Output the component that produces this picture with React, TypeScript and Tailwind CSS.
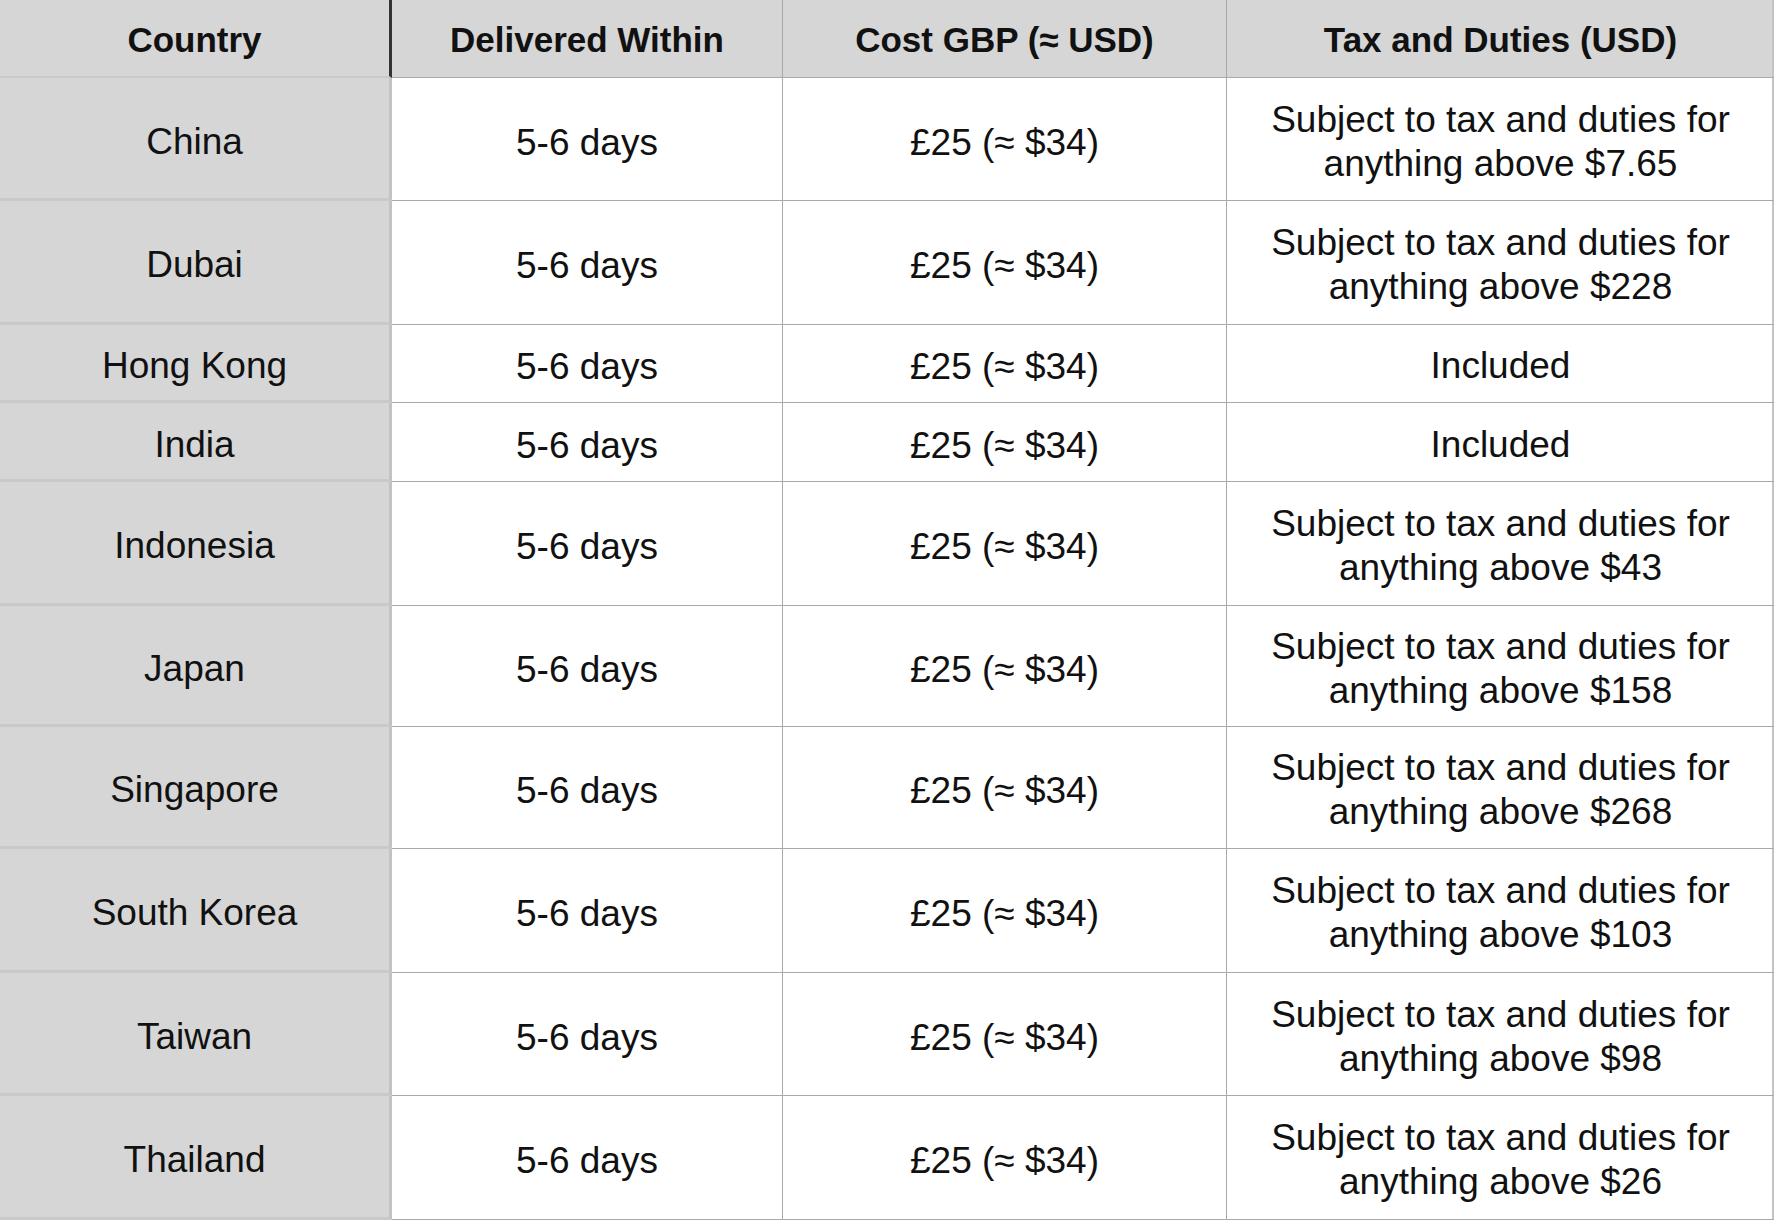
const rows = [
  { country: "China", tax: ["Subject to tax and duties for", "anything above $7.65"], h: "h-[123px]" },
  { country: "Dubai", tax: ["Subject to tax and duties for", "anything above $228"], h: "h-[124px]" },
  { country: "Hong Kong", tax: ["Included"], h: "h-[78px]" },
  { country: "India", tax: ["Included"], h: "h-[79px]" },
  { country: "Indonesia", tax: ["Subject to tax and duties for", "anything above $43"], h: "h-[124px]" },
  { country: "Japan", tax: ["Subject to tax and duties for", "anything above $158"], h: "h-[121px]" },
  { country: "Singapore", tax: ["Subject to tax and duties for", "anything above $268"], h: "h-[122px]" },
  { country: "South Korea", tax: ["Subject to tax and duties for", "anything above $103"], h: "h-[124px]" },
  { country: "Taiwan", tax: ["Subject to tax and duties for", "anything above $98"], h: "h-[123px]" },
  { country: "Thailand", tax: ["Subject to tax and duties for", "anything above $26"], h: "h-[124px]" },
];

const cols = "grid grid-cols-[392px_391px_444px_547px]";

export default function App() {
  return (
    <div className="min-h-screen bg-white font-['Liberation_Sans',Arial,sans-serif] text-[#111]">
      <div className="w-[1774px] border-r-2 border-[#c4c4c4]">
        {/* header */}
        <div className={`${cols} h-[78px] bg-[#d6d6d6] text-[35px] font-bold leading-[44px]`}>
          <div className="flex items-center justify-center pt-[3px] border-r-[3px] border-b-2 border-r-[#333] border-b-[#c9c9c9]">
            Country
          </div>
          <div className="flex items-center justify-center pt-[3px] border-r border-b border-[#a9a9a9]">
            Delivered Within
          </div>
          <div className="flex items-center justify-center pt-[3px] border-r border-b border-[#a9a9a9]">
            Cost GBP (≈ USD)
          </div>
          <div className="flex items-center justify-center pt-[3px] border-b border-[#a9a9a9]">
            Tax and Duties (USD)
          </div>
        </div>

        {rows.map((r) => (
          <div key={r.country} className={`${cols} ${r.h} text-[37px] leading-[44px]`}>
            <div className="flex items-center justify-center pt-[7px] bg-[#d6d6d6] border-r-[3px] border-b-[3px] border-r-[#c2c2c2] border-b-[#c9c9c9]">
              {r.country}
            </div>
            <div className="flex items-center justify-center pt-[7px] border-r border-b border-[#a9a9a9]">
              5-6 days
            </div>
            <div className="flex items-center justify-center pt-[7px] border-r border-b border-[#a9a9a9]">
              £25 (≈ $34)
            </div>
            <div className="flex flex-col items-center justify-center pt-[5px] border-b border-[#a9a9a9]">
              {r.tax.map((t) => (
                <span key={t}>{t}</span>
              ))}
            </div>
          </div>
        ))}
      </div>
    </div>
  );
}
